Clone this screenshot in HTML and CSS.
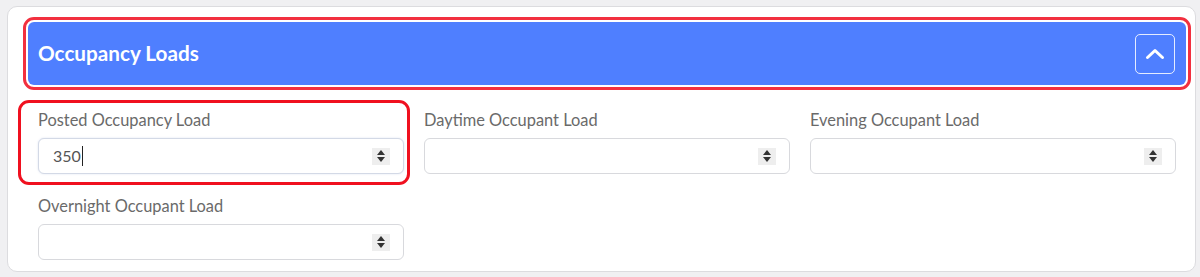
FILE: index.html
```html
<!DOCTYPE html>
<html>
<head>
<meta charset="utf-8">
<link rel="stylesheet" href="styles.css">
</head>
<body>
<div class="card">
  <div class="panel-head">
    <h2 class="panel-title">Occupancy Loads</h2>
    <button class="collapse-btn" type="button" aria-label="Collapse">
      <svg width="20" height="12" viewBox="0 0 20 12"><path d="M2.5 9.5 L10 2.5 L17.5 9.5" fill="none" stroke="#fff" stroke-width="3" stroke-linecap="round" stroke-linejoin="round"/></svg>
    </button>
  </div>
  <div class="fields">
    <div class="field field-marked">
      <label class="field-label">Posted Occupancy Load</label>
      <div class="num-input focused"><span class="num-value">350</span><span class="caret"></span><span class="spin"><i class="up"></i><i class="down"></i></span></div>
    </div>
    <div class="field">
      <label class="field-label">Daytime Occupant Load</label>
      <div class="num-input"><span class="num-value"></span><span class="spin"><i class="up"></i><i class="down"></i></span></div>
    </div>
    <div class="field">
      <label class="field-label">Evening Occupant Load</label>
      <div class="num-input"><span class="num-value"></span><span class="spin"><i class="up"></i><i class="down"></i></span></div>
    </div>
    <div class="field">
      <label class="field-label">Overnight Occupant Load</label>
      <div class="num-input"><span class="num-value"></span><span class="spin"><i class="up"></i><i class="down"></i></span></div>
    </div>
  </div>
</div>
</body>
</html>
```
FILE: styles.css
```css
html, body {
  margin: 0;
  padding: 0;
}
body {
  background: #f0f0f2;
  font-family: Lato, "Open Sans", Arial, sans-serif;
  width: 1200px;
  height: 277px;
  overflow: hidden;
}
.card {
  margin: 6px 0 0 7px;
  width: 1189px;
  height: 266px;
  box-sizing: border-box;
  background: #fff;
  border: 1px solid #dcdcdf;
  border-radius: 10px;
  padding: 15px 9px 0 20px;
}
.panel-head {
  display: flex;
  align-items: center;
  justify-content: space-between;
  height: 63px;
  background: #4f7fff;
  border-radius: 6px;
  padding: 0 11px 0 10px;
  outline: 3px solid #f2303f;
  outline-offset: 2px;
}
.panel-title {
  margin: 0 0 1px 0;
  color: #fff;
  font-size: 20.7px;
  font-weight: 700;
  line-height: 1;
}
.collapse-btn {
  width: 40px;
  height: 40px;
  box-sizing: border-box;
  border: 1.5px solid rgba(255,255,255,0.85);
  border-radius: 5px;
  background: transparent;
  padding: 0;
  display: flex;
  align-items: center;
  justify-content: center;
  margin-top: 1px;
}
.collapse-btn svg {
  display: block;
}
.fields {
  display: grid;
  grid-template-columns: repeat(3, 1fr);
  column-gap: 20px;
  row-gap: 22px;
  margin: 25px 10px 0 10px;
}
.field {
  position: relative;
  display: flex;
  flex-direction: column;
}
.field-marked::before {
  content: "";
  position: absolute;
  left: -20px;
  right: -6px;
  top: -10px;
  bottom: -11px;
  border: 3px solid #f0101f;
  border-radius: 11px;
  pointer-events: none;
}
.field-label {
  font-size: 16.4px;
  line-height: 20px;
  color: #6a6a6a;
  margin-bottom: 8px;
}
.num-input {
  height: 36px;
  box-sizing: border-box;
  border: 1px solid #d8d9dd;
  border-radius: 6px;
  display: flex;
  align-items: center;
  padding: 0 13px 0 14px;
  background: #fff;
}
.num-input.focused {
  border-color: #d3d9e6;
  box-shadow: 0 0 2px rgba(120,140,200,0.25);
}
.num-value {
  font-size: 16px;
  color: #555;
  line-height: 20px;
}
.caret {
  width: 1px;
  height: 20px;
  background: #222;
  margin-left: 1px;
}
.spin {
  margin-left: auto;
  width: 18px;
  height: 17px;
  background: #eeeeee;
  display: flex;
  flex-direction: column;
  align-items: center;
  justify-content: center;
  gap: 2px;
}
.spin i {
  display: block;
  width: 0;
  height: 0;
  border-left: 4.5px solid transparent;
  border-right: 4.5px solid transparent;
}
.spin .up {
  border-bottom: 5px solid #333;
}
.spin .down {
  border-top: 5px solid #333;
}
```
